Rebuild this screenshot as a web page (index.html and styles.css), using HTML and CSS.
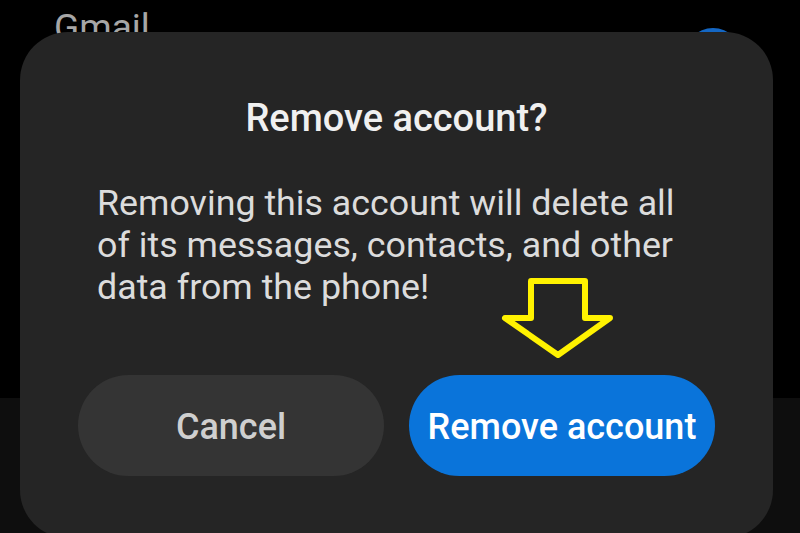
FILE: index.html
```html
<!DOCTYPE html>
<html lang="en">
<head>
<meta charset="utf-8">
<title>Remove account</title>
<link rel="stylesheet" href="styles.css">
</head>
<body>
<div class="page">
  <header class="appbar">
    <span class="app-title">Gmail</span>
    <span class="avatar"></span>
  </header>
  <div class="bottom-area"></div>
</div>

<div class="dialog" role="dialog" aria-labelledby="dlg-title">
  <h1 class="dialog-title" id="dlg-title">Remove account?</h1>
  <p class="dialog-body">Removing this account will delete all of its messages, contacts, and other data from the phone!</p>
  <div class="dialog-actions">
    <button class="btn btn-cancel">Cancel</button>
    <button class="btn btn-primary">Remove account</button>
  </div>
  <svg class="hint-arrow" width="120" height="90" viewBox="0 0 120 90" aria-hidden="true">
    <path d="M31 6 H85 V43 H110 L58 80 L5 43 H31 Z" fill="none" stroke="#fff200" stroke-width="6" stroke-linejoin="round"/>
  </svg>
</div>
</body>
</html>
```

FILE: styles.css
```css
html, body {
  margin: 0;
  padding: 0;
  background: #000;
  font-family: Roboto, "Noto Sans", "Liberation Sans", sans-serif;
}

.page {
  width: 800px;
  height: 533px;
  display: flex;
  flex-direction: column;
  overflow: hidden;
}

.appbar {
  height: 398px;
  background: #000;
  display: flex;
  align-items: flex-start;
  justify-content: space-between;
  padding: 6px 58px 0 54px;
  box-sizing: border-box;
}

.app-title {
  font-size: 37px;
  line-height: 44px;
  color: #a6a6a6;
}

.avatar {
  width: 58px;
  height: 58px;
  border-radius: 50%;
  background: #1467c4;
  margin-top: 22px;
}

.bottom-area {
  flex: 1;
  background: #0e0e0e;
}

.dialog {
  position: fixed;
  left: 20px;
  top: 32px;
  width: 753px;
  height: 506px;
  box-sizing: border-box;
  background: #252525;
  border-radius: 48px;
  padding: 64px 58px 0 58px;
  display: flex;
  flex-direction: column;
}

.dialog-title {
  margin: 0;
  text-align: center;
  font-size: 38px;
  line-height: 44px;
  font-weight: 500;
  color: #f0f0f0;
}

.dialog-body {
  margin: 42px 0 0 0;
  padding: 0 14px 0 19px;
  font-size: 35.8px;
  line-height: 42px;
  font-weight: 400;
  color: #dcdcdc;
}

.dialog-actions {
  margin-top: 67px;
  display: flex;
  gap: 25px;
}

.btn {
  flex: 1;
  height: 101px;
  border: none;
  border-radius: 51px;
  font-family: inherit;
  font-size: 36px;
  font-weight: 500;
  padding: 2px 0 0 0;
  display: flex;
  align-items: center;
  justify-content: center;
}

.btn-cancel {
  background: #343434;
  color: #cfcfcf;
}

.btn-primary {
  background: #0a74da;
  color: #ffffff;
}

.hint-arrow {
  position: absolute;
  left: 480px;
  top: 243px;
}
```
